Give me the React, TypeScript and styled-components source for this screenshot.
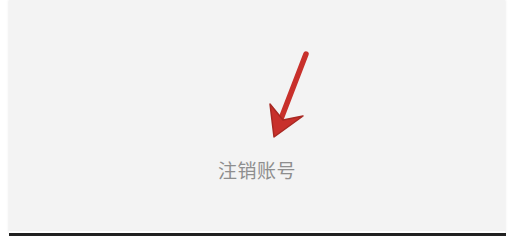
import React from "react";
import styled, { createGlobalStyle } from "styled-components";

const Global = createGlobalStyle`
  html, body { margin: 0; padding: 0; background: #ffffff; }
  body { font-family: "Noto Sans CJK SC", "Noto Sans", sans-serif; }
`;

const Page = styled.div`
  width: 528px;
  height: 238px;
  display: flex;
  flex-direction: column;
  padding-left: 9px;
  box-sizing: border-box;
  overflow: hidden;
`;

const Panel = styled.div`
  position: relative;
  width: 496px;
  height: 233px;
  background: #f3f3f3;
  box-shadow: 1px 0 2px rgba(0, 0, 0, 0.06), -1px 0 2px rgba(0, 0, 0, 0.06);
  display: flex;
  flex-direction: column;
  align-items: center;
  padding-top: 159px;
  box-sizing: border-box;
  border-bottom: 2px solid #ffffff;
`;

const BottomLine = styled.div`
  width: 497px;
  height: 3px;
  background: #232323;
`;

const Label = styled.span`
  font-size: 19px;
  line-height: 22px;
  color: #8e8e8e;
  letter-spacing: 0.5px;
`;

const Arrow = styled.svg`
  position: absolute;
  left: 0;
  top: 0;
  pointer-events: none;
`;

export default function App() {
  return (
    <>
      <Global />
      <Page>
        <Panel>
          <Arrow width="496" height="233" viewBox="9 0 496 233">
            <line
              x1="306"
              y1="54"
              x2="279"
              y2="124"
              stroke="#c8302b"
              strokeWidth="5.5"
              strokeLinecap="round"
            />
            <path
              d="M270 104 L274 137 L303 116 L283 120 Z"
              fill="#c8302b"
              stroke="#a82822"
              strokeWidth="1.5"
              strokeLinejoin="round"
            />
          </Arrow>
          <Label>注销账号</Label>
        </Panel>
        <BottomLine />
      </Page>
    </>
  );
}
